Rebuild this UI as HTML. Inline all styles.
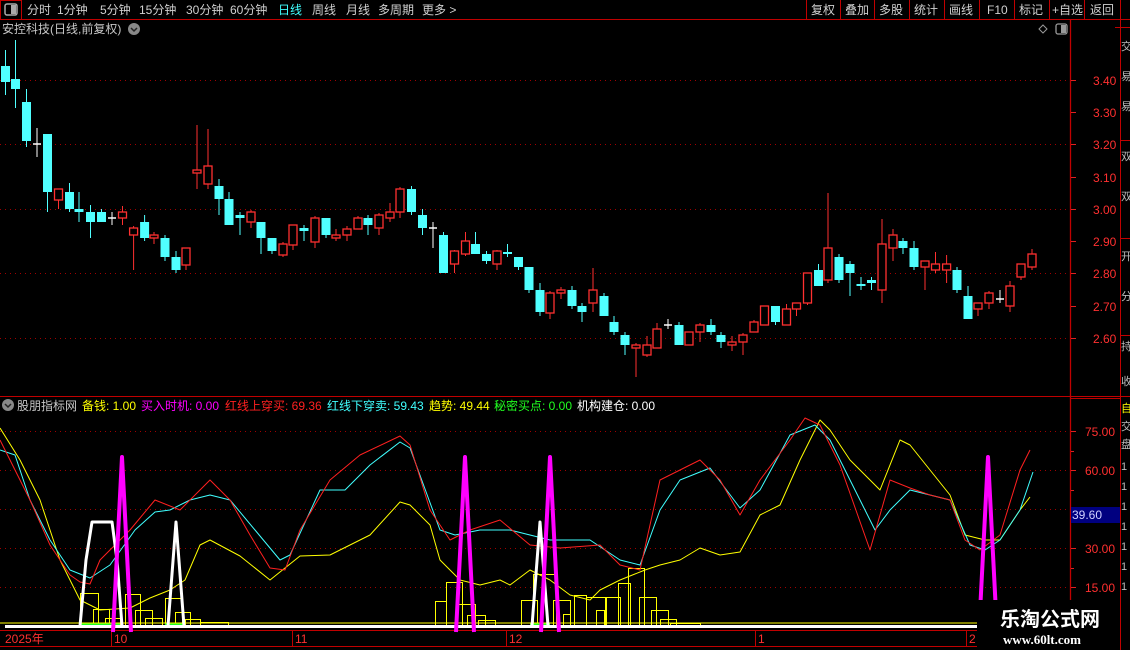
<!DOCTYPE html>
<html><head><meta charset="utf-8"><style>
body{margin:0;background:#000;width:1130px;height:650px;overflow:hidden;font-family:"Liberation Sans","Noto Sans CJK SC",sans-serif;}
svg{position:absolute;left:0;top:0}
text{font-family:"Liberation Sans","Noto Sans CJK SC",sans-serif;font-size:12px}
</style></head><body>
<svg id="s" width="1130" height="650" xmlns="http://www.w3.org/2000/svg">
<rect width="1130" height="650" fill="#000"/>
<line x1="0" y1="19.5" x2="1130" y2="19.5" stroke="#c00000"/>
<rect x="0.5" y="0.5" width="21" height="19" fill="none" stroke="#c00000"/>
<rect x="5" y="4" width="12" height="11" rx="2" fill="none" stroke="#aaa" stroke-width="1.5"/><rect x="11" y="5" width="5" height="9" fill="#aaa"/>
<g fill="#d0d0d0">
<text x="27" y="14">分时</text><text x="57" y="14">1分钟</text><text x="100" y="14">5分钟</text><text x="139" y="14">15分钟</text><text x="186" y="14">30分钟</text><text x="230" y="14">60分钟</text>
<text x="278" y="14" fill="#40ffff">日线</text><text x="312" y="14">周线</text><text x="346" y="14">月线</text><text x="378" y="14">多周期</text><text x="422" y="14">更多 &gt;</text>
<text x="811" y="14">复权</text><text x="845" y="14">叠加</text><text x="879" y="14">多股</text><text x="914" y="14">统计</text><text x="949" y="14">画线</text><text x="987" y="14">F10</text><text x="1019" y="14">标记</text><text x="1052" y="14">+自选</text><text x="1090" y="14">返回</text>
</g>
<g stroke="#c00000"><line x1="806.5" y1="0" x2="806.5" y2="19"/><line x1="840.5" y1="0" x2="840.5" y2="19"/><line x1="874.5" y1="0" x2="874.5" y2="19"/><line x1="909.5" y1="0" x2="909.5" y2="19"/><line x1="944.5" y1="0" x2="944.5" y2="19"/><line x1="979.5" y1="0" x2="979.5" y2="19"/><line x1="1014.5" y1="0" x2="1014.5" y2="19"/><line x1="1049.5" y1="0" x2="1049.5" y2="19"/><line x1="1084.5" y1="0" x2="1084.5" y2="19"/><line x1="1120.5" y1="0" x2="1120.5" y2="19"/></g>
<text x="2" y="33" fill="#c8c8c8">安控科技(日线,前复权)</text>
<circle cx="134" cy="29" r="6" fill="#888"/><path d="M131 28l3 3 3-3" stroke="#222" stroke-width="1.5" fill="none"/>
<path d="M1043 25l4 4-4 4-4-4z" fill="none" stroke="#999"/>
<rect x="1056" y="24" width="11" height="10" rx="2" fill="none" stroke="#999" stroke-width="1.3"/><rect x="1061" y="25" width="5" height="8" fill="#999"/>
<line x1="1070.5" y1="20" x2="1070.5" y2="646" stroke="#c00000" stroke-width="1.3"/>
<line x1="1120.5" y1="20" x2="1120.5" y2="650" stroke="#c00000"/>
<line x1="1115" y1="27.5" x2="1130" y2="27.5" stroke="#c00000"/>
<line x1="1120" y1="140.5" x2="1130" y2="140.5" stroke="#c00000"/>
<line x1="1120" y1="238.5" x2="1130" y2="238.5" stroke="#c00000"/>
<line x1="1120" y1="335.5" x2="1130" y2="335.5" stroke="#c00000"/>
<line x1="0" y1="396.5" x2="1130" y2="396.5" stroke="#c00000"/>
<line x1="1070" y1="398.5" x2="1120" y2="398.5" stroke="#c00000"/>
<g fill="#bbb"><text x="1121" y="50" style="font-size:11px">交</text><text x="1121" y="80" style="font-size:11px">易</text><text x="1121" y="110" style="font-size:11px">易</text><text x="1121" y="160" style="font-size:11px">双</text><text x="1121" y="200" style="font-size:11px">双</text><text x="1121" y="260" style="font-size:11px">开</text><text x="1121" y="300" style="font-size:11px">分</text><text x="1121" y="350" style="font-size:11px">持</text><text x="1121" y="385" style="font-size:11px">收</text>
<text x="1121" y="412" fill="#ff0" style="font-size:11px">自</text><text x="1121" y="430" style="font-size:11px">交</text><text x="1121" y="448" style="font-size:11px">盘</text>
<text x="1121" y="470" style="font-size:11px">1</text><text x="1121" y="490" style="font-size:11px">1</text><text x="1121" y="510" style="font-size:11px">1</text><text x="1121" y="530" style="font-size:11px">1</text><text x="1121" y="550" style="font-size:11px">1</text><text x="1121" y="570" style="font-size:11px">1</text><text x="1121" y="590" style="font-size:11px">1</text></g>
<g stroke="#a00000" stroke-dasharray="1 4"><line x1="0" y1="80.5" x2="1068" y2="80.5"/><line x1="0" y1="144.5" x2="1068" y2="144.5"/><line x1="0" y1="209.5" x2="1068" y2="209.5"/><line x1="0" y1="273.5" x2="1068" y2="273.5"/><line x1="0" y1="338.5" x2="1068" y2="338.5"/>
<line x1="0" y1="431.5" x2="1068" y2="431.5"/><line x1="0" y1="470.5" x2="1068" y2="470.5"/><line x1="0" y1="509.5" x2="1068" y2="509.5"/><line x1="0" y1="548.5" x2="1068" y2="548.5"/><line x1="0" y1="587.5" x2="1068" y2="587.5"/></g>
<g stroke="#e02020"><line x1="1071" y1="80.5" x2="1076" y2="80.5"/><line x1="1071" y1="112.5" x2="1076" y2="112.5"/><line x1="1071" y1="144.5" x2="1076" y2="144.5"/><line x1="1071" y1="177.5" x2="1076" y2="177.5"/><line x1="1071" y1="209.5" x2="1076" y2="209.5"/><line x1="1071" y1="241.5" x2="1076" y2="241.5"/><line x1="1071" y1="273.5" x2="1076" y2="273.5"/><line x1="1071" y1="306.5" x2="1076" y2="306.5"/><line x1="1071" y1="338.5" x2="1076" y2="338.5"/>
<line x1="1071" y1="431.5" x2="1076" y2="431.5"/><line x1="1071" y1="451.5" x2="1074" y2="451.5"/><line x1="1071" y1="470.5" x2="1076" y2="470.5"/><line x1="1071" y1="490.5" x2="1074" y2="490.5"/><line x1="1071" y1="548.5" x2="1076" y2="548.5"/><line x1="1071" y1="568.5" x2="1074" y2="568.5"/><line x1="1071" y1="587.5" x2="1076" y2="587.5"/></g>
<g fill="#ff3030"><text x="1093" y="85">3.40</text><text x="1093" y="117">3.30</text><text x="1093" y="149">3.20</text><text x="1093" y="182">3.10</text><text x="1093" y="214">3.00</text><text x="1093" y="246">2.90</text><text x="1093" y="278">2.80</text><text x="1093" y="311">2.70</text><text x="1093" y="343">2.60</text>
<text x="1085" y="436">75.00</text><text x="1085" y="475">60.00</text><text x="1085" y="553">30.00</text><text x="1085" y="592">15.00</text></g>
<rect x="1071" y="507" width="49" height="16" fill="#000080"/><text x="1072" y="519" fill="#d0d0ff">39.60</text>
<circle cx="8" cy="405" r="6" fill="#888"/><path d="M5 404l3 3 3-3" stroke="#222" stroke-width="1.5" fill="none"/>
<text x="17" y="410" fill="#c8c8c8">股朋指标网</text>
<text x="82" y="410" fill="#ffff00">备钱: 1.00</text>
<text x="141" y="410" fill="#ff00ff">买入时机: 0.00</text>
<text x="225" y="410" fill="#ff2020">红线上穿买: 69.36</text>
<text x="327" y="410" fill="#40ffff">红线下穿卖: 59.43</text>
<text x="429" y="410" fill="#ffff00">趋势: 49.44</text>
<text x="494" y="410" fill="#20ff20">秘密买点: 0.00</text>
<text x="577" y="410" fill="#ffffff">机构建仓: 0.00</text>
<line x1="0" y1="630.5" x2="1070" y2="630.5" stroke="#c00000"/>
<line x1="0" y1="646.5" x2="1070" y2="646.5" stroke="#c00000"/>
<g stroke="#c00000"><line x1="111.5" y1="630" x2="111.5" y2="646"/><line x1="292.5" y1="630" x2="292.5" y2="646"/><line x1="506.5" y1="630" x2="506.5" y2="646"/><line x1="755.5" y1="630" x2="755.5" y2="646"/><line x1="966.5" y1="630" x2="966.5" y2="646"/></g>
<g fill="#ff3030"><text x="5" y="643">2025年</text><text x="114" y="643">10</text><text x="295" y="643">11</text><text x="509" y="643">12</text><text x="758" y="643">1</text><text x="969" y="643">2</text></g>
<g id="c"></g>
<rect x="977" y="600" width="143" height="50" fill="#000"/>
<text x="1000" y="626" fill="#fff" style="font-size:20px;font-weight:bold">乐淘公式网</text>
<text x="1003" y="644" fill="#fff" style="font-family:'Liberation Serif',serif;font-size:13px;font-weight:bold">www.60lt.com</text>
</svg>
<script>
var C=[
[5.5,66,82,50,95,'c'],[15.5,79,89,40,108,'c'],[26.5,102,141,89,147,'c'],[37,144,144,128,157,'w'],[47.5,134,192,134,212,'c'],[58.5,189,200,189,209,'r'],[69.5,192,209,183,212,'c'],[79,209,212,192,222,'c'],[90.5,212,222,205,238,'c'],[101.5,212,222,209,222,'c'],[112,218,218,212,225,'w'],[122.5,212,218,206,225,'r'],[133.6,228,235,226,270,'r'],[144.6,222,238,215,241,'c'],[154,235,238,232,244,'r'],[165,238,257,235,261,'c'],[176,257,270,251,273,'c'],[186,248,265,248,270,'r'],[197,170,173,125,189,'r'],[208,166,184,129,189,'r'],[219,186,199,179,215,'c'],[229,199,225,192,225,'c'],[240,215,218,212,235,'c'],[251,212,222,210,228,'r'],[261,222,238,222,254,'c'],[272,238,251,238,254,'c'],[283,244,255,242,257,'r'],[293,225,245,225,250,'r'],[304,228,231,225,241,'c'],[315,218,242,216,248,'r'],[326,218,235,218,238,'c'],[336,235,238,229,241,'r'],[347,229,235,226,241,'r'],[358,218,229,216,229,'r'],[368,218,225,215,235,'c'],[379,215,228,213,235,'r'],[390,212,218,203,222,'r'],[400,189,212,187,218,'r'],[411.5,189,212,186,215,'c'],[422.5,215,228,209,235,'c'],[433,228,228,222,248,'w'],[443.5,235,273,232,273,'c'],[454.5,251,264,250,273,'r'],[465.5,241,254,232,256,'r'],[475.5,244,254,232,254,'c'],[486.5,254,261,251,264,'c'],[497,251,264,250,270,'r'],[507.5,252,254,244,257,'c'],[518.5,257,267,257,270,'c'],[529,267,290,267,293,'c'],
[540,290,312,283,316,'c'],[550,293,313,291,319,'r'],[561,290,293,287,299,'r'],[572,290,306,286,309,'c'],[582,306,312,303,322,'c'],[593,290,303,268,312,'r'],[604,296,316,293,316,'c'],[614,322,332,316,335,'c'],[625,335,345,332,355,'c'],[636,345,348,343,377,'r'],[647,345,355,336,357,'r'],[657,329,348,323,348,'r'],[668,325,325,319,329,'w'],[679,325,345,322,345,'c'],[689,332,345,332,345,'r'],[700,325,332,323,342,'r'],[711,325,332,319,335,'c'],[721,335,342,332,348,'c'],[732,342,345,336,351,'r'],[743,335,342,333,355,'r'],[754,322,332,320,332,'r'],[764.5,306,325,306,325,'r'],[775.5,306,322,306,325,'c'],[786.5,309,325,304,325,'r'],[796.5,303,309,303,316,'r'],[807.5,273,303,273,305,'r'],[818.5,270,286,264,286,'c'],[828,248,280,193,283,'r'],[839,257,280,254,283,'c'],[850,264,273,261,296,'c'],[861,284,286,277,290,'c'],[871.5,280,283,277,290,'c'],[882,244,290,219,303,'r'],[893,235,248,229,261,'r'],[903,241,248,238,254,'c'],[914,248,267,241,270,'c'],[925,261,267,261,290,'r'],[935.5,264,270,252,273,'r'],[946.6,264,270,255,283,'r'],[957,270,290,267,293,'c'],[968,296,319,286,319,'c'],[978,303,309,303,316,'r'],[989,293,303,291,309,'r'],[1000,299,299,290,303,'w'],[1010,286,306,281,312,'r'],[1021,264,277,264,280,'r'],[1032,254,267,249,270,'r']];
var h='';
var B=[[80,593,98],[93,609,109],[105,618,120],[125,594,140],[135,610,152],[145,618,162],[165,598,182],[175,612,190],[185,619,200],[200,622,228],[435,601,446],[446,582,462],[457,604,475],[467,615,485],[478,620,495],[521,600,537],[533,574,556],[553,600,570],[563,614,570],[574,595,586],[586,597,605],[596,610,604],[606,597,620],[618,583,630],[628,568,644],[639,597,656],[651,610,668],[660,619,676],[670,623,700]];
B.forEach(function(b){h+='<rect x="'+b[0]+'.5" y="'+b[1]+'.5" width="'+(b[2]-b[0])+'" height="'+(626-b[1])+'" fill="none" stroke="#ffff00"/>';});
h+='<rect x="80" y="623" width="40" height="3" fill="#20ff20"/><rect x="165" y="623" width="20" height="3" fill="#20ff20"/><rect x="530" y="623" width="20" height="3" fill="#20ff20"/>';
function pl(p,c,w){return '<polyline points="'+p+'" fill="none" stroke="'+c+'" stroke-width="'+(w||1)+'" stroke-linejoin="round"/>';}
h+=pl('0,428 20,460 40,500 60,560 80,600 100,610 130,608 150,598 170,590 185,580 200,545 210,540 240,556 270,580 300,556 330,555 370,535 400,502 410,505 430,525 440,560 460,580 480,585 500,580 510,585 530,570 550,580 570,595 590,600 600,590 620,580 645,570 660,565 680,560 700,548 720,555 740,552 760,515 780,505 800,460 820,420 830,430 850,460 880,490 900,440 910,445 930,470 950,495 965,535 985,540 1000,540 1020,510 1030,497','#ffff00');
h+=pl('0,450 15,455 30,500 50,540 70,570 90,578 110,565 135,530 155,512 170,510 190,500 210,495 230,500 255,530 280,560 290,555 320,490 345,490 370,465 400,442 410,448 440,530 455,535 480,530 510,530 550,540 590,540 620,560 640,565 660,510 680,480 710,468 740,508 760,490 790,435 815,425 830,440 860,500 875,530 890,510 910,490 950,500 970,545 985,550 1000,540 1020,510 1033,472','#40ffff');
h+=pl('0,440 15,470 30,500 50,545 70,575 80,582 90,584 100,560 130,530 155,500 180,510 210,480 230,500 250,535 270,568 285,570 300,530 330,480 360,455 400,436 410,445 430,510 450,540 470,530 500,520 530,545 560,548 600,545 620,565 640,570 660,480 700,460 720,480 740,515 760,480 790,440 805,418 820,425 840,465 870,550 890,480 910,488 930,495 950,500 965,540 980,550 1000,535 1020,470 1030,450','#ff2020');
h+='<line x1="0" y1="623" x2="1068" y2="623" stroke="#ffff00"/><rect x="5" y="625" width="1063" height="3" fill="#fff"/>';
h+=pl('80,626 86,560 92,522 112,522 117,560 122,626','#fff',3);
h+=pl('168,626 176,522 184,626','#fff',3);
h+=pl('532,626 540,522 548,626','#fff',3);
[122,465,550,988].forEach(function(x){h+=pl((x-9)+',632 '+x+',457 '+(x+9)+',632','#ff00ff',4);});
C.forEach(function(c){var x=c[0],t=c[1],b=c[2],hi=c[3],lo=c[4],k=c[5];
var col=k=='c'?'#50ffff':k=='r'?'#ff3030':'#ffffff';
if(k=='w'){h+='<line x1="'+x+'" y1="'+hi+'" x2="'+x+'" y2="'+lo+'" stroke="#fff"/><line x1="'+(x-4)+'" y1="'+t+'" x2="'+(x+4)+'" y2="'+t+'" stroke="#fff" stroke-width="1.5"/>';return;}
h+='<line x1="'+x+'" y1="'+hi+'" x2="'+x+'" y2="'+lo+'" stroke="'+col+'"/>';
var bh=Math.max(b-t,2);
if(k=='c')h+='<rect x="'+(x-4.5)+'" y="'+t+'" width="9" height="'+bh+'" fill="'+col+'"/>';
else h+='<rect x="'+(x-4)+'" y="'+t+'" width="8" height="'+bh+'" fill="#000" stroke="'+col+'" stroke-width="1.3"/>';});
document.getElementById('c').innerHTML=h;
</script>
</body></html>
